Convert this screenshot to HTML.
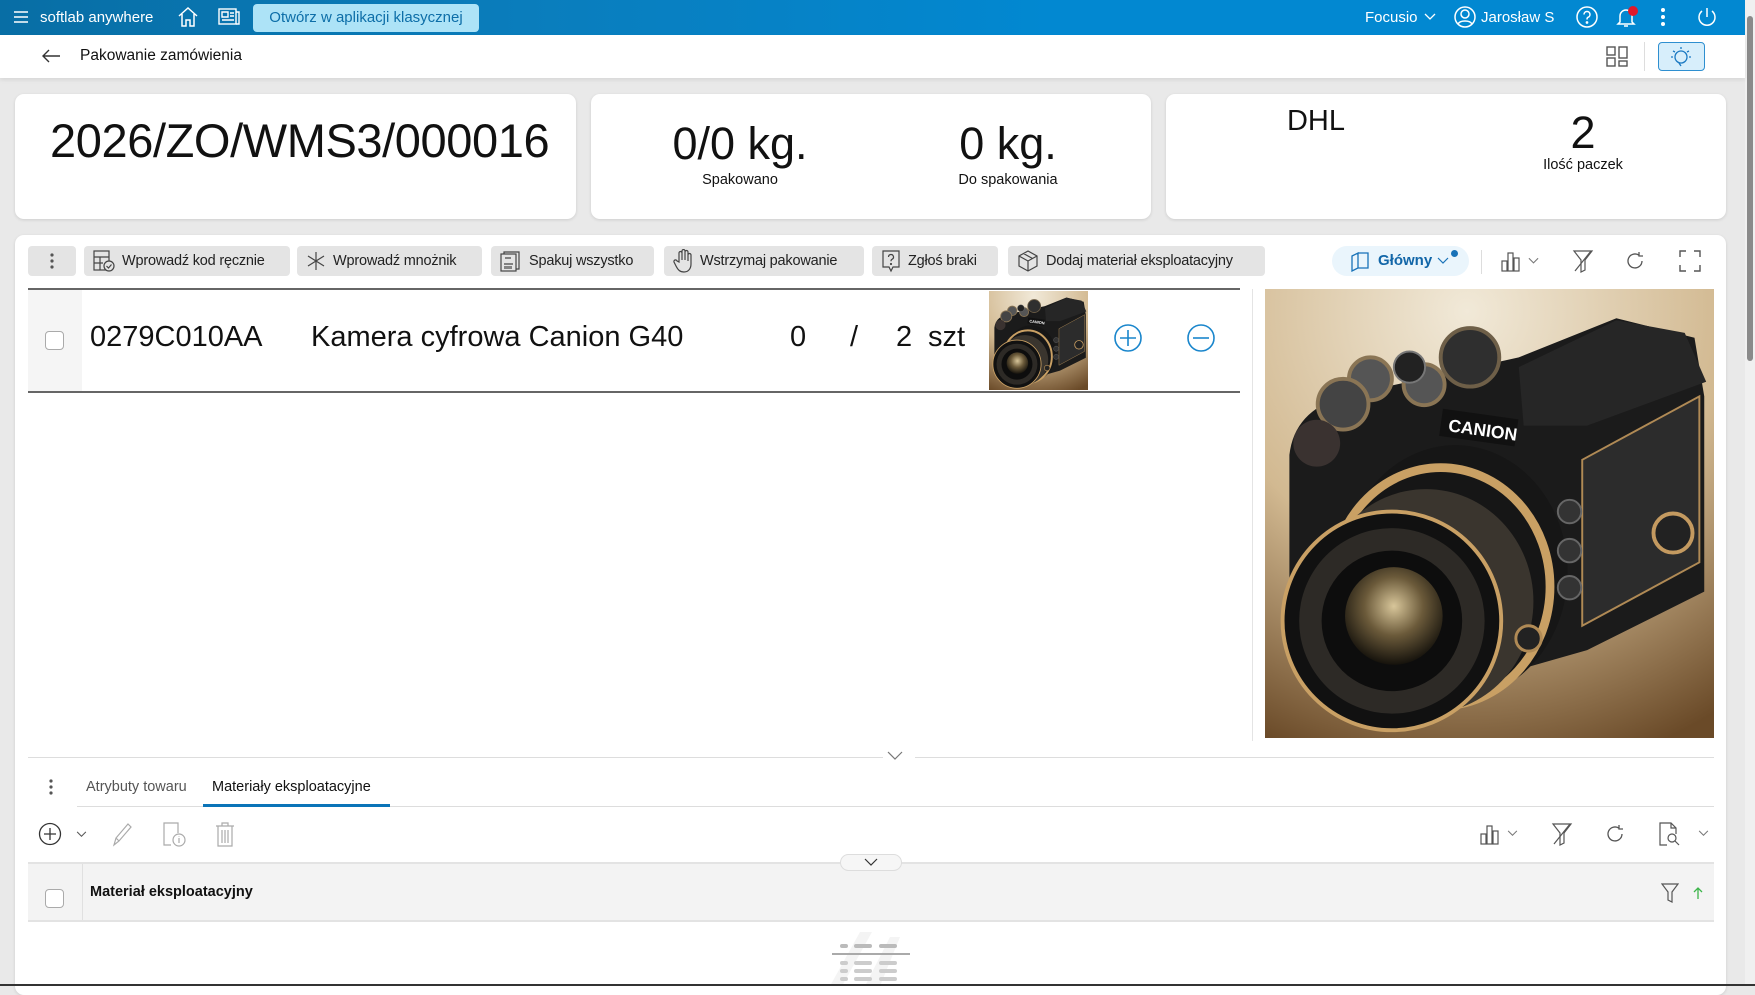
<!DOCTYPE html>
<html><head><meta charset="utf-8">
<style>
*{margin:0;padding:0;box-sizing:border-box}
body{width:1755px;height:986px;overflow:hidden;background:#e9e9e9;font-family:"Liberation Sans",sans-serif;color:#111;position:relative}
.a{position:absolute}
.top{left:0;top:0;width:1745px;height:35px;background:linear-gradient(90deg,#086ea5 0%,#0a7dbc 30%,#0288d1 60%,#0288d1 100%)}
.wt{color:#fff;font-size:15px}
.card{background:#fff;border-radius:9px;box-shadow:0 1px 3px rgba(0,0,0,.12)}
.btn{top:246px;height:30px;background:#e4e4e4;border-radius:4px;font-size:14.5px;color:#222;display:flex;align-items:center;padding-left:8px;gap:6px;white-space:nowrap;letter-spacing:-.2px}
.btn svg{flex:none}
.c{text-align:center;transform:translateX(-50%)}
.cb{width:19px;height:19px;border:1px solid #aaa;border-radius:4px;background:#fff}
</style></head><body>
<div class="a top"></div>
<svg class="a" style="left:12px;top:8px" width="18" height="18" viewBox="0 0 18 18" stroke="#fff" stroke-width="1.6"><path d="M2 4h14M2 9h14M2 14h14"/></svg>
<div class="a wt" style="left:40px;top:9px">softlab anywhere</div>
<svg class="a" style="left:176px;top:5px" width="24" height="24" viewBox="0 0 24 24" fill="none" stroke="#fff" stroke-width="1.5"><path d="M3 11L12 3l9 8M6 9v12h4v-6h4v6h4V9"/></svg>
<svg class="a" style="left:218px;top:7px" width="22" height="20" viewBox="0 0 22 20" fill="none" stroke="#fff" stroke-width="1.4"><rect x="1" y="2" width="17" height="15"/><path d="M18 5h3v12H18M4 5h6v5H4zM12 6h4M12 9h4M4 13h12"/></svg>
<div class="a" style="left:253px;top:4px;width:226px;height:28px;background:#ade3f7;border-radius:4px;color:#0d6ea8;font-size:15px;line-height:28px;text-align:center">Otwórz w aplikacji klasycznej</div>
<div class="a wt" style="left:1365px;top:9px">Focusio</div>
<svg class="a" style="left:1424px;top:13px" width="12" height="8" viewBox="0 0 12 8" fill="none" stroke="#fff" stroke-width="1.3"><path d="M1 1l5 5 5-5"/></svg>
<svg class="a" style="left:1454px;top:6px" width="22" height="22" viewBox="0 0 22 22" fill="none" stroke="#fff" stroke-width="1.5"><circle cx="11" cy="11" r="10"/><circle cx="11" cy="8" r="4"/><path d="M4 18c2-4 12-4 14 0"/></svg>
<div class="a wt" style="left:1481px;top:9px">Jarosław S</div>
<svg class="a" style="left:1576px;top:6px" width="22" height="22" viewBox="0 0 22 22" fill="none" stroke="#fff" stroke-width="1.5"><circle cx="11" cy="11" r="10"/><path d="M8 8.5a3 3 0 1 1 4 2.8c-1 .4-1 1-1 2.2"/><circle cx="11" cy="16.5" r=".6" fill="#fff"/></svg>
<svg class="a" style="left:1614px;top:5px" width="24" height="24" viewBox="0 0 24 24" fill="none" stroke="#fff" stroke-width="1.5"><path d="M6 17V11a6 6 0 0 1 12 0v6l2 2H4zM10 21h4"/></svg>
<div class="a" style="left:1628px;top:6px;width:10px;height:10px;border-radius:50%;background:#e0192b"></div>
<svg class="a" style="left:1660px;top:7px" width="6" height="20"><circle cx="3" cy="3" r="2" fill="#fff"/><circle cx="3" cy="10" r="2" fill="#fff"/><circle cx="3" cy="17" r="2" fill="#fff"/></svg>
<svg class="a" style="left:1695px;top:5px" width="24" height="24" viewBox="0 0 24 24" fill="none" stroke="#fff" stroke-width="1.5"><path d="M12 3v9M7 6a8 8 0 1 0 10 0"/></svg>
<div class="a" style="left:1745px;top:0;width:10px;height:986px;background:#f0f0f0"></div>
<div class="a" style="left:1747px;top:16px;width:6px;height:345px;background:#8a8a8a;border-radius:3px"></div>
<div class="a" style="left:0;top:35px;width:1745px;height:43px;background:#fff;box-shadow:0 2px 4px rgba(0,0,0,.08)"></div>
<svg class="a" style="left:41px;top:48px" width="20" height="16" viewBox="0 0 20 16" fill="none" stroke="#333" stroke-width="1.4"><path d="M19 8H2M8 2L2 8l6 6"/></svg>
<div class="a" style="left:80px;top:47px;font-size:15.5px;color:#111">Pakowanie zamówienia</div>
<svg class="a" style="left:1606px;top:46px" width="22" height="21" viewBox="0 0 22 21" fill="none" stroke="#555" stroke-width="1.4"><rect x="1" y="1" width="8" height="8"/><rect x="13" y="1" width="8" height="11"/><rect x="1" y="12" width="8" height="8"/><rect x="13" y="15" width="8" height="5"/></svg>
<div class="a" style="left:1644px;top:42px;width:1px;height:29px;background:#ddd"></div>
<div class="a" style="left:1658px;top:42px;width:47px;height:29px;background:#d7eefb;border:1px solid #2e8fd0;border-radius:4px"></div>
<svg class="a" style="left:1668px;top:44px" width="26" height="26" viewBox="0 0 26 26" fill="none" stroke="#1b79c2" stroke-width="1.3"><circle cx="13" cy="13" r="6"/><path d="M11 19l2 3M13 3v2M5 7l2 1M21 7l-2 1M3 13h2M21 13h2"/></svg>
<div class="a card" style="left:15px;top:94px;width:561px;height:125px"></div>
<div class="a card" style="left:591px;top:94px;width:560px;height:125px"></div>
<div class="a card" style="left:1166px;top:94px;width:560px;height:125px"></div>
<div class="a" style="left:50px;top:113px;font-size:47px;letter-spacing:-.4px">2026/ZO/WMS3/000016</div>
<div class="a c" style="left:740px;top:118px;font-size:45px">0/0 kg.</div>
<div class="a c" style="left:740px;top:172px;font-size:14.5px">Spakowano</div>
<div class="a c" style="left:1008px;top:118px;font-size:45px">0 kg.</div>
<div class="a c" style="left:1008px;top:172px;font-size:14.5px">Do spakowania</div>
<div class="a c" style="left:1316px;top:105px;font-size:29px">DHL</div>
<div class="a c" style="left:1583px;top:107px;font-size:45px">2</div>
<div class="a c" style="left:1583px;top:157px;font-size:14.5px">Ilość paczek</div>
<div class="a card" style="left:15px;top:235px;width:1711px;height:760px;border-radius:9px"></div>
<div class="a btn" style="left:28px;width:48px;justify-content:center;padding:0"><svg width="4" height="16"><circle cx="2" cy="2" r="1.6" fill="#555"/><circle cx="2" cy="8" r="1.6" fill="#555"/><circle cx="2" cy="14" r="1.6" fill="#555"/></svg></div>
<div class="a btn" style="left:84px;width:206px"><svg width="24" height="24" viewBox="0 0 24 24" fill="none" stroke="#444" stroke-width="1.2"><rect x="2" y="2" width="15" height="19"/><path d="M2 8h15M2 14h9M8 8v13"/><circle cx="17" cy="17" r="5" fill="#e4e4e4"/><path d="M14.5 17l2 2 3-3.5"/></svg>Wprowadź kod ręcznie</div>
<div class="a btn" style="left:297px;width:185px"><svg width="22" height="22" viewBox="0 0 22 22" stroke="#444" stroke-width="1.2"><path d="M11 2v18M3 6l16 10M19 6L3 16"/></svg>Wprowadź mnożnik</div>
<div class="a btn" style="left:491px;width:163px"><svg width="24" height="22" viewBox="0 0 24 22" fill="none" stroke="#444" stroke-width="1.2"><rect x="2" y="4" width="15" height="17"/><path d="M5 4V2h15v17h-3"/><path d="M5 14h9M6 16v3M8 16v3M10 16v3M12 16v3M6 8h6"/></svg>Spakuj wszystko</div>
<div class="a btn" style="left:664px;width:200px"><svg width="22" height="24" viewBox="0 0 22 24" fill="none" stroke="#444" stroke-width="1.2"><path d="M7 13V4a1.5 1.5 0 0 1 3 0v7V2a1.5 1.5 0 0 1 3 0v9V3a1.5 1.5 0 0 1 3 0v9V6a1.5 1.5 0 0 1 3 0v9c0 5-3 8-7 8s-6-2-8-6l-2-4a1.5 1.5 0 0 1 3-1z"/></svg>Wstrzymaj pakowanie</div>
<div class="a btn" style="left:872px;width:126px"><svg width="22" height="24" viewBox="0 0 22 24" fill="none" stroke="#444" stroke-width="1.2"><path d="M3 2h16v16h-6l-2 4-2-4H3z"/><path d="M8.5 8a2.5 2.5 0 1 1 3.5 2.3c-1 .4-1 1-1 2"/><circle cx="11" cy="15" r=".5" fill="#444"/></svg>Zgłoś braki</div>
<div class="a btn" style="left:1008px;width:257px"><svg width="24" height="24" viewBox="0 0 24 24" fill="none" stroke="#444" stroke-width="1.2"><path d="M12 2l9 5v10l-9 5-9-5V7zM3 7l9 5 9-5M12 12v10M7.5 4.5l9 5"/></svg>Dodaj materiał eksploatacyjny</div>
<div class="a" style="left:1332px;top:246px;width:137px;height:30px;background:#eaf5fc;border-radius:15px"></div>
<svg class="a" style="left:1349px;top:250px" width="22" height="22" viewBox="0 0 22 22" fill="none" stroke="#1872b8" stroke-width="1.3"><path d="M3 6l6-3v15l-6 3zM9 3h10v15H9"/></svg>
<div class="a" style="left:1378px;top:252px;font-size:15px;color:#1266a8;font-weight:bold">Główny</div>
<svg class="a" style="left:1437px;top:257px" width="12" height="8" viewBox="0 0 12 8" fill="none" stroke="#1872b8" stroke-width="1.2"><path d="M1 1l5 5 5-5"/></svg>
<div class="a" style="left:1451px;top:250px;width:7px;height:7px;border-radius:50%;background:#1872b8"></div>
<div class="a" style="left:1481px;top:250px;width:1px;height:24px;background:#ddd"></div>
<svg class="a" style="left:1500px;top:250px" width="22" height="22" viewBox="0 0 22 22" fill="none" stroke="#555" stroke-width="1.2"><rect x="2" y="11" width="5" height="10"/><rect x="8" y="3" width="5" height="18"/><rect x="14" y="8" width="5" height="13"/></svg>
<svg class="a" style="left:1528px;top:257px" width="11" height="8" viewBox="0 0 12 8" fill="none" stroke="#777" stroke-width="1.2"><path d="M1 1l5 5 5-5"/></svg>
<svg class="a" style="left:1572px;top:249px" width="22" height="24" viewBox="0 0 22 24" fill="none" stroke="#555" stroke-width="1.2"><path d="M2 2h18l-7 9v10l-4 2V11z"/><path d="M3 22L19 2"/></svg>
<svg class="a" style="left:1624px;top:250px" width="22" height="22" viewBox="0 0 22 22" fill="none" stroke="#555" stroke-width="1.3"><path d="M18 11a7 7 0 1 1-3-5.8M15 2v4h4"/></svg>
<svg class="a" style="left:1678px;top:249px" width="24" height="24" viewBox="0 0 24 24" fill="none" stroke="#555" stroke-width="1.4"><path d="M2 8V2h6M16 2h6v6M22 16v6h-6M8 22H2v-6"/></svg>
<div class="a" style="left:28px;top:288px;width:1212px;height:2px;background:#666"></div>
<div class="a" style="left:28px;top:391px;width:1212px;height:2px;background:#666"></div>
<div class="a" style="left:28px;top:290px;width:54px;height:101px;background:#f5f5f5"></div>
<div class="a cb" style="left:45px;top:331px"></div>
<div class="a" style="left:90px;top:321px;font-size:29px">0279C010AA</div>
<div class="a" style="left:311px;top:321px;font-size:29px">Kamera cyfrowa Canion G40</div>
<div class="a" style="left:790px;top:321px;font-size:29px">0</div>
<div class="a" style="left:850px;top:321px;font-size:29px">/</div>
<div class="a" style="left:896px;top:321px;font-size:29px">2</div>
<div class="a" style="left:928px;top:321px;font-size:29px">szt</div>
<svg class="a" style="left:989px;top:291px" width="99" height="99" viewBox="0 0 460 460"><use href="#cam"/></svg>
<svg class="a" style="left:1113px;top:323px" width="30" height="30" viewBox="0 0 30 30" fill="none" stroke="#1a86cc" stroke-width="1.6"><circle cx="15" cy="15" r="13"/><path d="M15 7v16M7 15h16"/></svg>
<svg class="a" style="left:1186px;top:323px" width="30" height="30" viewBox="0 0 30 30" fill="none" stroke="#1a86cc" stroke-width="1.6"><circle cx="15" cy="15" r="13"/><path d="M7 15h16"/></svg>
<div class="a" style="left:1252px;top:289px;width:1px;height:452px;background:#e4e4e4"></div>
<svg class="a" style="left:1265px;top:289px" width="449" height="449" viewBox="0 0 460 460">
<defs>
<radialGradient id="bg" cx="0.45" cy="0.05" r="1.05"><stop offset="0" stop-color="#f1e9d8"/><stop offset="0.55" stop-color="#d2b991"/><stop offset="1" stop-color="#6a4a28"/></radialGradient>
<radialGradient id="gl" cx="0.5" cy="0.4" r="0.6"><stop offset="0" stop-color="#d8c69a"/><stop offset="0.5" stop-color="#6b5a3a"/><stop offset="1" stop-color="#15120c"/></radialGradient>
<g id="cam">
<rect width="460" height="460" fill="url(#bg)"/>
<path d="M25 170Q30 125 80 110L260 70L360 30L440 50L450 110L450 310L330 370L260 390L60 390L25 330Z" fill="#1b1b1b"/>
<path d="M260 80L360 32L430 45L452 95L330 140L265 140Z" fill="#262626"/>
<path d="M325 175L445 110L445 280L325 345Z" fill="#2c2c2c" stroke="#b08a55" stroke-width="2"/>
<circle cx="418" cy="250" r="20" fill="#222" stroke="#c49a60" stroke-width="4"/>
<rect x="180" y="128" width="78" height="28" fill="#111" transform="rotate(8 219 142)"/>
<text x="188" y="150" fill="#fff" font-family="Liberation Sans" font-weight="bold" font-size="18" transform="rotate(8 219 142)">CANION</text>
<circle cx="210" cy="70" r="30" fill="#2f2f2f" stroke="#6e5f48" stroke-width="4"/>
<circle cx="108" cy="92" r="22" fill="#555" stroke="#8a7555" stroke-width="4"/>
<circle cx="163" cy="98" r="21" fill="#555" stroke="#8a7555" stroke-width="4"/>
<circle cx="80" cy="118" r="26" fill="#444" stroke="#8a7555" stroke-width="4"/>
<circle cx="53" cy="158" r="24" fill="#3a3230"/>
<circle cx="148" cy="80" r="16" fill="#222" stroke="#777" stroke-width="2"/>
<ellipse cx="195" cy="290" rx="115" ry="130" fill="#161616"/>
<ellipse cx="180" cy="305" rx="112" ry="122" fill="none" stroke="#c9a064" stroke-width="9"/>
<ellipse cx="165" cy="320" rx="110" ry="115" fill="#3a352e"/>
<circle cx="130" cy="340" r="112" fill="#111" stroke="#c9a064" stroke-width="4"/>
<circle cx="130" cy="340" r="95" fill="#2d2a26"/>
<circle cx="130" cy="340" r="72" fill="#0d0d0d"/>
<circle cx="132" cy="335" r="50" fill="url(#gl)"/>
<circle cx="312" cy="228" r="12" fill="#333" stroke="#666" stroke-width="2"/>
<circle cx="312" cy="268" r="12" fill="#333" stroke="#666" stroke-width="2"/>
<circle cx="312" cy="306" r="12" fill="#333" stroke="#666" stroke-width="2"/>
<circle cx="270" cy="358" r="13" fill="#222" stroke="#b08a55" stroke-width="3"/>
</g></defs>
<use href="#cam"/>
</svg>
<div class="a" style="left:28px;top:757px;width:855px;height:1px;background:#ddd"></div>
<div class="a" style="left:915px;top:757px;width:799px;height:1px;background:#ddd"></div>
<svg class="a" style="left:887px;top:751px" width="16" height="10" viewBox="0 0 16 10" fill="none" stroke="#777" stroke-width="1.2"><path d="M1 1l7 7 7-7"/></svg>
<svg class="a" style="left:49px;top:779px" width="4" height="16"><circle cx="2" cy="2" r="1.6" fill="#555"/><circle cx="2" cy="8" r="1.6" fill="#555"/><circle cx="2" cy="14" r="1.6" fill="#555"/></svg>
<div class="a" style="left:86px;top:779px;font-size:14.5px;color:#555">Atrybuty towaru</div>
<div class="a" style="left:212px;top:779px;font-size:14.5px;color:#111">Materiały eksploatacyjne</div>
<div class="a" style="left:77px;top:806px;width:1637px;height:1px;background:#ddd"></div>
<div class="a" style="left:203px;top:804px;width:187px;height:3px;background:#0b74b8"></div>
<svg class="a" style="left:38px;top:822px" width="24" height="24" viewBox="0 0 24 24" fill="none" stroke="#333" stroke-width="1.3"><circle cx="12" cy="12" r="10.5"/><path d="M12 6v12M6 12h12"/></svg>
<svg class="a" style="left:76px;top:831px" width="11" height="7" viewBox="0 0 12 8" fill="none" stroke="#555" stroke-width="1.2"><path d="M1 1l5 5 5-5"/></svg>
<svg class="a" style="left:110px;top:821px" width="24" height="26" viewBox="0 0 24 26" fill="none" stroke="#aaa" stroke-width="1.2"><path d="M4 24l2-7L18 3l3 3L9 20zM6 17l3 3"/></svg>
<svg class="a" style="left:161px;top:821px" width="26" height="26" viewBox="0 0 26 26" fill="none" stroke="#aaa" stroke-width="1.2"><path d="M10 24H3V2h14v10"/><circle cx="18" cy="19" r="6"/><path d="M18 17v5M18 15v.5"/></svg>
<svg class="a" style="left:214px;top:821px" width="22" height="26" viewBox="0 0 22 26" fill="none" stroke="#aaa" stroke-width="1.2"><path d="M2 5h18M8 5V2h6v3M4 5v20h14V5M8 9v13M11 9v13M14 9v13"/></svg>
<svg class="a" style="left:1479px;top:823px" width="22" height="22" viewBox="0 0 22 22" fill="none" stroke="#555" stroke-width="1.2"><rect x="2" y="11" width="5" height="10"/><rect x="8" y="3" width="5" height="18"/><rect x="14" y="8" width="5" height="13"/></svg>
<svg class="a" style="left:1507px;top:830px" width="11" height="7" viewBox="0 0 12 8" fill="none" stroke="#777" stroke-width="1.2"><path d="M1 1l5 5 5-5"/></svg>
<svg class="a" style="left:1551px;top:822px" width="22" height="24" viewBox="0 0 22 24" fill="none" stroke="#555" stroke-width="1.2"><path d="M2 2h18l-7 9v10l-4 2V11z"/><path d="M3 22L19 2"/></svg>
<svg class="a" style="left:1604px;top:823px" width="22" height="22" viewBox="0 0 22 22" fill="none" stroke="#555" stroke-width="1.3"><path d="M18 11a7 7 0 1 1-3-5.8M15 2v4h4"/></svg>
<svg class="a" style="left:1658px;top:821px" width="24" height="26" viewBox="0 0 24 26" fill="none" stroke="#555" stroke-width="1.2"><path d="M9 24H2V2h11l5 5v6M13 2v5h5"/><circle cx="14" cy="17" r="4"/><path d="M17 20l4 4"/></svg>
<svg class="a" style="left:1698px;top:830px" width="11" height="7" viewBox="0 0 12 8" fill="none" stroke="#777" stroke-width="1.2"><path d="M1 1l5 5 5-5"/></svg>
<div class="a" style="left:28px;top:862px;width:1686px;height:60px;background:#f3f3f3;border-top:2px solid #e3e3e3;border-bottom:2px solid #e3e3e3"></div>
<div class="a" style="left:82px;top:864px;width:1px;height:56px;background:#e0e0e0"></div>
<div class="a" style="left:840px;top:854px;width:62px;height:17px;background:#f6f6f6;border:1px solid #ddd;border-radius:9px"></div>
<svg class="a" style="left:864px;top:858px" width="14" height="9" viewBox="0 0 14 9" fill="none" stroke="#333" stroke-width="1.2"><path d="M1 1l6 6 6-6"/></svg>
<div class="a cb" style="left:45px;top:889px"></div>
<div class="a" style="left:90px;top:884px;font-size:14.5px;color:#111;font-weight:bold">Materiał eksploatacyjny</div>
<svg class="a" style="left:1661px;top:883px" width="18" height="20" viewBox="0 0 18 20" fill="none" stroke="#555" stroke-width="1.2"><path d="M1 1h16l-6 8v10l-4-2V9z"/></svg>
<svg class="a" style="left:1693px;top:886px" width="10" height="14" viewBox="0 0 10 14" fill="none" stroke="#3cb54a" stroke-width="1.3"><path d="M5 13V2M1 6l4-4 4 4"/></svg>
<svg class="a" style="left:820px;top:927px" width="100" height="59" viewBox="0 0 100 59">
<path d="M10 59L40 5h12L22 59zM45 59L70 10h10L60 59z" fill="#f4f4f4"/>
<rect x="20" y="17" width="8" height="4" rx="2" fill="#bbb"/><rect x="34" y="17" width="18" height="4" rx="2" fill="#bbb"/><rect x="59" y="17" width="18" height="4" rx="2" fill="#bbb"/>
<rect x="12" y="26" width="78" height="2" fill="#aaa"/>
<rect x="20" y="34" width="8" height="4" rx="2" fill="#ccc"/><rect x="34" y="34" width="18" height="4" rx="2" fill="#ccc"/><rect x="59" y="34" width="18" height="4" rx="2" fill="#ccc"/>
<rect x="20" y="42" width="8" height="4" rx="2" fill="#ccc"/><rect x="34" y="42" width="18" height="4" rx="2" fill="#ccc"/><rect x="59" y="42" width="18" height="4" rx="2" fill="#ccc"/>
<rect x="20" y="50" width="8" height="4" rx="2" fill="#ccc"/><rect x="34" y="50" width="18" height="4" rx="2" fill="#ccc"/><rect x="59" y="50" width="18" height="4" rx="2" fill="#ccc"/>
</svg>
<div class="a" style="left:0;top:984px;width:1755px;height:2px;background:#333"></div>
</body></html>
